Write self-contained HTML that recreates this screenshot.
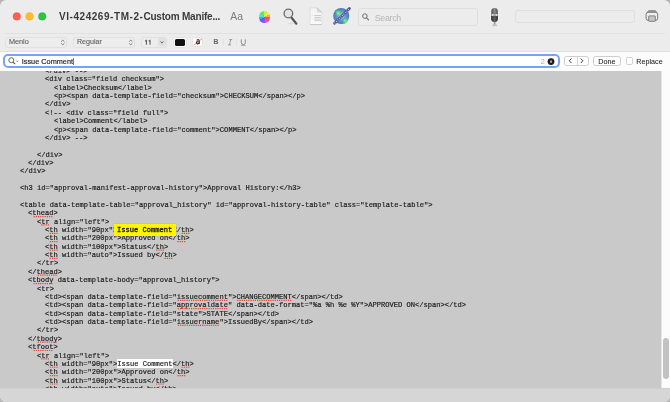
<!DOCTYPE html>
<html><head><meta charset="utf-8">
<style>
*{margin:0;padding:0;box-sizing:border-box}
html,body{width:670px;height:402px;overflow:hidden;background:#b4b4b4}
body{position:relative;font-family:"Liberation Sans",sans-serif}
.win{will-change:transform;position:absolute;left:0;top:0;width:670px;height:402px;border-radius:6px;overflow:hidden;background:#ececec}
.ab{position:absolute}
.t{position:absolute;white-space:nowrap;line-height:10px}
.ta{will-change:transform;position:absolute;left:0;top:70.6px;width:661px;height:317.6px;background:#c9c9c9;overflow:hidden}
.l{position:absolute;white-space:pre;font-family:"Liberation Mono",monospace;font-size:7.8px;line-height:8.37px;height:8.37px;color:#1c1c1c;-webkit-text-stroke:0.2px #1c1c1c;letter-spacing:0px;transform:scaleX(0.909);transform-origin:0 0}
.l u{text-decoration:none;position:relative;display:inline-block;height:8.37px;vertical-align:top}
.l u:after{content:"";position:absolute;left:0.3px;right:0.3px;top:6.75px;height:1.1px;background:repeating-linear-gradient(90deg,#e2483b 0 1.15px,transparent 1.15px 2.12px)}
.pop{position:absolute;border:0.6px solid #e0e0e0;border-radius:3px;background:#ededed}
.fbt{position:absolute;font-size:7.1px;color:#5e5e5e;-webkit-text-stroke:0.1px #5e5e5e;line-height:10px;white-space:nowrap}
</style></head><body>
<div class="win">
  <!-- title bar / toolbar -->
  <div class="ab" style="left:5px;top:32.8px;width:660px;height:0.8px;background:#e1e1e1"></div>
  <svg class="ab" style="left:0;top:0" width="56" height="30" viewBox="0 0 56 30">
    <circle cx="16.8" cy="16.4" r="3.85" fill="#fe5f57" stroke="#e2463f" stroke-width="0.3"/>
    <circle cx="29.5" cy="16.4" r="3.85" fill="#febc2e" stroke="#dea123" stroke-width="0.3"/>
    <circle cx="42.2" cy="16.4" r="3.85" fill="#28c840" stroke="#1dab2c" stroke-width="0.3"/>
  </svg>
  <div class="t" style="left:59px;top:12.2px;font-weight:bold;font-size:10px;color:#3b3b3b"><span style="letter-spacing:0.55px">VI-424269-TM-2-</span><span style="letter-spacing:-0.2px">Custom Manife...</span></div>
  <div class="t" style="left:230.3px;top:12.4px;font-size:10.4px;color:#7d7d7d">Aa</div>
  <!-- color wheel -->
  <div class="ab" style="left:258.5px;top:11.2px;width:11.5px;height:11.5px;border-radius:50%;filter:blur(0.25px);background:conic-gradient(#c8f048 0 30deg,#f8e848 30deg 60deg,#f8a848 60deg 90deg,#f85050 90deg 120deg,#f0489a 120deg 150deg,#e64ee6 150deg 180deg,#8c52ea 180deg 210deg,#4c62e8 210deg 240deg,#4aa8f2 240deg 270deg,#42e8d6 270deg 300deg,#4ae888 300deg 330deg,#62e852 330deg 360deg)"></div>
  <!-- magnifier -->
  <svg class="ab" style="left:280px;top:6px" width="22" height="22" viewBox="0 0 22 22">
    <ellipse cx="11" cy="17.6" rx="3.5" ry="0.8" fill="#000" opacity="0.06"/>
    <line x1="11.6" y1="11.8" x2="16.4" y2="17.7" stroke="#555" stroke-width="2.2" stroke-linecap="round"/>
    <circle cx="8.4" cy="7.5" r="4.3" fill="#e3e3e3" stroke="#6c6c6c" stroke-width="1.3"/>
  </svg>
  <!-- document -->
  <svg class="ab" style="left:306px;top:5px" width="22" height="22" viewBox="0 0 22 22">
    <defs><linearGradient id="dg" x1="0" y1="0" x2="0" y2="1"><stop offset="0" stop-color="#f2f2f2"/><stop offset="1" stop-color="#fbfbfb"/></linearGradient></defs>
    <path d="M4.1 2.8 H10.8 L15.9 7.5 V19.7 H4.1 Z" fill="url(#dg)" stroke="#d0d0d0" stroke-width="0.5"/>
    <path d="M10.8 2.8 L15.9 7.5 L12.2 7.6 Q10.9 7.4 10.8 6 Z" fill="#dadada"/>
    <path d="M10.8 2.8 L15.9 7.5" stroke="#a8a8a8" stroke-width="0.55"/>
    <rect x="4.1" y="19.0" width="11.8" height="0.8" fill="#c4c4c4"/>
    <g fill="#c4c4c4">
      <rect x="8.3" y="10.2" width="6.8" height="0.8"/>
      <rect x="8.3" y="11.9" width="6.8" height="0.8"/>
      <rect x="8.3" y="13.6" width="6.8" height="0.8"/>
      <rect x="8.3" y="15.3" width="6.8" height="0.8"/>
      <rect x="5.8" y="10.2" width="0.6" height="0.8"/>
      <rect x="5.8" y="13.6" width="0.6" height="0.8"/>
    </g>
  </svg>
  <!-- globe -->
  <svg class="ab" style="left:330px;top:5px" width="22" height="22" viewBox="0 0 22 22">
    <defs><radialGradient id="gg" cx="0.5" cy="0.5" r="0.55"><stop offset="0" stop-color="#b8d4f2"/><stop offset="0.55" stop-color="#6393d4"/><stop offset="1" stop-color="#3f6fba"/></radialGradient>
    <radialGradient id="gr" cx="0.5" cy="0.5" r="0.5"><stop offset="0" stop-color="#a0f4b4"/><stop offset="1" stop-color="#38c064"/></radialGradient></defs>
    <circle cx="11.2" cy="11" r="8" fill="url(#gg)"/>
    <path d="M5.2 6.2 Q8.2 4.4 11.4 5.6 Q11 9.6 8.4 11.4 Q5.6 10.2 5.2 6.2Z" fill="url(#gr)" opacity="0.85"/>
    <path d="M12.4 14 Q15.8 12 18.4 13.6 Q17.6 18 14.4 18.8 Q12 17.4 12.4 14Z" fill="url(#gr)" opacity="0.85"/>
    <line x1="4.6" y1="18.2" x2="19.4" y2="3.6" stroke="#4a5796" stroke-width="2.8" stroke-linecap="round"/>
    <line x1="4.6" y1="18.2" x2="19.4" y2="3.6" stroke="#d4dcf6" stroke-width="1.2" stroke-dasharray="0.8 1.3"/>
    <line x1="5.3" y1="18.6" x2="19.9" y2="4.2" stroke="#8b97cc" stroke-width="0.6" stroke-dasharray="1 1.1" opacity="0.8"/>
  </svg>
  <!-- search field -->
  <div class="ab" style="left:357.6px;top:8.2px;width:120.4px;height:17.4px;border:0.6px solid #dddddd;border-radius:3.5px;background:#ececec"></div>
  <svg class="ab" style="left:360px;top:11px" width="12" height="12" viewBox="0 0 12 12">
    <circle cx="4.9" cy="5.1" r="2.3" fill="none" stroke="#6f6f6f" stroke-width="1"/>
    <line x1="6.6" y1="6.8" x2="8.6" y2="8.8" stroke="#6f6f6f" stroke-width="1.1" stroke-linecap="round"/>
  </svg>
  <div class="t" style="left:374.7px;top:13px;font-size:8.8px;letter-spacing:-0.28px;color:#b5b5b5">Search</div>
  <!-- mic -->
  <svg class="ab" style="left:484px;top:5px;filter:blur(0.3px)" width="22" height="22" viewBox="0 0 22 22">
    <defs><linearGradient id="mg" x1="0" x2="1"><stop offset="0" stop-color="#4a4a4a"/><stop offset="0.5" stop-color="#8c8c8c"/><stop offset="1" stop-color="#4a4a4a"/></linearGradient>
    <linearGradient id="mg2" x1="0" x2="1"><stop offset="0" stop-color="#2e2e2e"/><stop offset="0.5" stop-color="#606060"/><stop offset="1" stop-color="#2e2e2e"/></linearGradient></defs>
    <rect x="6.6" y="2.6" width="7.9" height="15" rx="3.9" fill="#f4f4f4" opacity="0.7"/>
    <rect x="8.2" y="19.4" width="5" height="1.8" rx="0.5" fill="#c4c4c4"/>
    <rect x="9.8" y="16.6" width="1.7" height="3" fill="#9a9a9a"/>
    <rect x="7.3" y="3.0" width="6.5" height="14" rx="3.2" fill="url(#mg)"/>
    <path d="M7.3 10.9 H13.8 V13.8 Q13.8 16.9 10.5 16.9 Q7.3 16.9 7.3 13.8Z" fill="url(#mg2)"/>
    <rect x="7.3" y="9.2" width="6.5" height="1.6" fill="#a8a8a8"/>
    <circle cx="8.7" cy="10" r="0.8" fill="#fff"/><circle cx="12.4" cy="10" r="0.8" fill="#fff"/>
  </svg>
  <!-- right field -->
  <div class="ab" style="left:515.1px;top:10.1px;width:120.4px;height:12.5px;border:0.6px solid #dedede;border-radius:3px;background:#ececec"></div>
  <!-- printer -->
  <svg class="ab" style="left:640px;top:5px" width="22" height="22" viewBox="0 0 22 22">
    <path d="M8.6 5.6 H15.4 L16.6 7.2 H7.4 Z" fill="#ababab" stroke="#6e6e6e" stroke-width="0.6" stroke-linejoin="round"/>
    <rect x="6.1" y="7.3" width="11.6" height="8" rx="2" fill="#efefef" stroke="#6a6a6a" stroke-width="0.9"/>
    <rect x="8.7" y="10.9" width="6.6" height="5.4" rx="0.5" fill="#c6c6c6" stroke="#6a6a6a" stroke-width="0.8"/>
  </svg>
  <!-- format bar -->
  <div class="pop" style="left:5.4px;top:36.6px;width:62px;height:11.2px"></div>
  <div class="fbt" style="left:8.9px;top:37.3px;font-size:7.3px">Menlo</div>
  <svg class="ab" style="left:60px;top:39px" width="6" height="7" viewBox="0 0 6 7"><path d="M1.2 2.6 L2.8 1.1 L4.4 2.6 M1.2 4.3 L2.8 5.8 L4.4 4.3" fill="none" stroke="#5a5a5a" stroke-width="0.75"/></svg>
  <div class="pop" style="left:72.9px;top:36.6px;width:62px;height:11.2px"></div>
  <div class="fbt" style="left:77px;top:37.3px">Regular</div>
  <svg class="ab" style="left:127.5px;top:39px" width="6" height="7" viewBox="0 0 6 7"><path d="M1.2 2.6 L2.8 1.1 L4.4 2.6 M1.2 4.3 L2.8 5.8 L4.4 4.3" fill="none" stroke="#5a5a5a" stroke-width="0.75"/></svg>
  <div class="pop" style="left:140.6px;top:36.7px;width:26.6px;height:10.9px"></div>
  <svg class="ab" style="left:144px;top:39px" width="8" height="7" viewBox="0 0 8 7"><path d="M1 2.1 L2.4 1.4 V5.8 M4.6 2.1 L6 1.4 V5.8" fill="none" stroke="#5a5a5a" stroke-width="1.05"/></svg>
  <div class="ab" style="left:158.1px;top:38.1px;width:7.7px;height:8.3px;border-radius:2px;background:#e0e0e0"></div>
  <svg class="ab" style="left:158.1px;top:38.1px" width="8" height="9" viewBox="0 0 8 9"><path d="M2.4 3.6 L3.9 5 L5.4 3.6" fill="none" stroke="#555" stroke-width="0.95"/></svg>
  <div class="ab" style="left:174.4px;top:37.9px;width:11.2px;height:8.9px;border-radius:2px;background:#fff;box-shadow:0 0 0 0.4px #d6d6d6"></div>
  <div class="ab" style="left:175.2px;top:38.6px;width:9.6px;height:7.5px;border-radius:1.6px;background:#111"></div>
  <div class="ab" style="left:192.6px;top:38.4px;width:9.4px;height:7.6px;border-radius:1.5px;background:#fff;box-shadow:0 0 0 0.4px #d9d9d9"></div>
  <svg class="ab" style="left:192.6px;top:38.4px" width="10" height="8" viewBox="0 0 10 8">
    <path d="M3.6 2.2 Q4.6 1.5 5.6 1.8 Q6.3 2.1 6.2 3 V5.9 M6.2 3.6 Q3.4 3.5 3.4 4.8 Q3.5 6 4.8 5.9 Q5.9 5.8 6.2 4.8" fill="none" stroke="#1a1a1a" stroke-width="1.1"/>
    <line x1="0.8" y1="7.2" x2="9" y2="0.7" stroke="#e8553a" stroke-width="0.65"/>
  </svg>
  <div class="fbt" style="left:213.4px;top:36.9px;font-weight:bold;font-size:6.8px;color:#6e6e6e">B</div>
  <div class="ab" style="left:222.6px;top:38.8px;width:0.6px;height:7px;background:#e2e2e2"></div>
  <svg class="ab" style="left:226px;top:38px" width="8" height="9" viewBox="0 0 8 9">
    <path d="M3.2 1.6 H6.2 M2 6.9 H5 M4.7 1.6 L3.5 6.9" fill="none" stroke="#8a8a8a" stroke-width="0.8"/>
  </svg>
  <div class="ab" style="left:236.4px;top:38.8px;width:0.6px;height:7px;background:#e2e2e2"></div>
  <svg class="ab" style="left:239px;top:38px" width="9" height="9" viewBox="0 0 9 9">
    <path d="M2.3 1.4 V4.8 Q2.3 6.6 4.3 6.6 Q6.3 6.6 6.3 4.8 V1.4" fill="none" stroke="#858585" stroke-width="0.95"/>
    <line x1="2" y1="7.5" x2="6.6" y2="7.5" stroke="#8a8a8a" stroke-width="0.6"/>
  </svg>
  <!-- find bar -->
  <div class="ab" style="left:0;top:51.3px;width:670px;height:19.3px;background:#fcfcfc;border-top:0.5px solid #e0e0e0"></div>
  <div class="ab" style="left:3.2px;top:54.1px;width:556.8px;height:14.2px;border:2px solid #77a4f1;border-radius:5px;background:#fff"></div>
  <svg class="ab" style="left:7px;top:56px" width="14" height="10" viewBox="0 0 14 10">
    <circle cx="4.3" cy="4.2" r="2.5" fill="none" stroke="#555" stroke-width="0.9"/>
    <line x1="6.1" y1="6.1" x2="8.2" y2="8.2" stroke="#555" stroke-width="1.1"/>
    <path d="M9.3 4.6 L10.3 5.7 L11.3 4.6" fill="none" stroke="#555" stroke-width="0.75"/>
  </svg>
  <div class="t" style="left:21.7px;top:57.2px;font-size:7.3px;letter-spacing:0.02px;color:#1e1e1e;-webkit-text-stroke:0.15px #1e1e1e">Issue Comment</div>
  <div class="ab" style="left:73.3px;top:57.6px;width:1.2px;height:7.1px;background:#3a7ff0"></div>
  <div class="t" style="left:540.8px;top:57.2px;font-size:7.2px;color:#a9a9a9">2</div>
  <svg class="ab" style="left:546.7px;top:57.8px" width="8" height="8" viewBox="0 0 8 8"><circle cx="4" cy="3.6" r="3.4" fill="#1a1a1a"/><path d="M2.9 2.5 L5.1 4.7 M5.1 2.5 L2.9 4.7" stroke="#fff" stroke-width="0.75"/></svg>
  <div class="ab" style="left:564.4px;top:56.2px;width:24.3px;height:9.4px;border:0.6px solid #cfcfcf;border-radius:2.5px;background:#fff"></div>
  <div class="ab" style="left:576.5px;top:56.6px;width:0.6px;height:8.8px;background:#d4d4d4"></div>
  <svg class="ab" style="left:564.4px;top:56.2px" width="25" height="10" viewBox="0 0 25 10">
    <path d="M7.5 2.5 L5.3 4.8 L7.5 7.1" fill="none" stroke="#333" stroke-width="0.95"/>
    <path d="M16.7 2.5 L18.9 4.8 L16.7 7.1" fill="none" stroke="#333" stroke-width="0.95"/>
  </svg>
  <div class="ab" style="left:593.2px;top:56px;width:27.6px;height:10px;border:0.7px solid #cdcdcd;border-radius:2.5px;background:#fff"></div>
  <div class="t" style="left:598.3px;top:56.9px;font-size:7.2px;color:#222;-webkit-text-stroke:0.05px #222">Done</div>
  <div class="ab" style="left:625.6px;top:57.4px;width:7.6px;height:7.2px;border:0.6px solid #d2d2d2;border-radius:1.8px;background:#fff"></div>
  <div class="t" style="left:636.3px;top:56.8px;font-size:7.2px;color:#222;-webkit-text-stroke:0.05px #222">Replace</div>
  <!-- text area -->
  <div class="ta">
  <div class="ab" style="left:117.1px;top:288.30px;width:56px;height:8.9px;background:#ffffff"></div>
  <div class="l" style="top:-4.05px;left:45.13px">&lt;/div&gt; --&gt;</div><div class="l" style="top:4.32px;left:45.13px">&lt;div class="field checksum"&gt;</div><div class="l" style="top:12.69px;left:53.64px">&lt;label&gt;Checksum&lt;/label&gt;</div><div class="l" style="top:21.06px;left:53.64px">&lt;p&gt;&lt;span data-template-field="checksum"&gt;CHECKSUM&lt;/span&gt;&lt;/p&gt;</div><div class="l" style="top:29.43px;left:45.13px">&lt;/div&gt;</div><div class="l" style="top:37.80px;left:45.13px">&lt;!-- &lt;div class="field full"&gt;</div><div class="l" style="top:46.17px;left:53.64px">&lt;label&gt;Comment&lt;/label&gt;</div><div class="l" style="top:54.54px;left:53.64px">&lt;p&gt;&lt;span data-template-field="comment"&gt;COMMENT&lt;/span&gt;&lt;/p&gt;</div><div class="l" style="top:62.91px;left:45.13px">&lt;/div&gt; --&gt;</div><div class="l" style="top:79.65px;left:36.62px">&lt;/div&gt;</div><div class="l" style="top:88.02px;left:28.11px">&lt;/div&gt;</div><div class="l" style="top:96.39px;left:19.60px">&lt;/div&gt;</div><div class="l" style="top:113.13px;left:19.60px">&lt;h3 id="approval-manifest-approval-history"&gt;Approval History:&lt;/h3&gt;</div><div class="l" style="top:129.87px;left:19.60px">&lt;table data-template-table="approval_history" id="approval-history-table" class="template-table"&gt;</div><div class="l" style="top:138.24px;left:28.11px">&lt;thead&gt;</div><div class="l" style="top:146.61px;left:36.62px">&lt;tr align="left"&gt;</div><div class="l" style="top:154.98px;left:45.13px">&lt;th width="90px"&gt;Issue Comment&lt;/th&gt;</div><div class="l" style="top:163.35px;left:45.13px">&lt;th width="200px"&gt;Approved on&lt;/th&gt;</div><div class="l" style="top:171.72px;left:45.13px">&lt;th width="100px"&gt;Status&lt;/th&gt;</div><div class="l" style="top:180.09px;left:45.13px">&lt;th width="auto"&gt;Issued by&lt;/th&gt;</div><div class="l" style="top:188.46px;left:36.62px">&lt;/tr&gt;</div><div class="l" style="top:196.83px;left:28.11px">&lt;/thead&gt;</div><div class="l" style="top:205.20px;left:28.11px">&lt;tbody data-template-body="approval_history"&gt;</div><div class="l" style="top:213.57px;left:36.62px">&lt;tr&gt;</div><div class="l" style="top:221.94px;left:45.13px">&lt;td&gt;&lt;span data-template-field="issuecomment"&gt;CHANGECOMMENT&lt;/span&gt;&lt;/td&gt;</div><div class="l" style="top:230.31px;left:45.13px">&lt;td&gt;&lt;span data-template-field="approvaldate" data-date-format="%a %h %e %Y"&gt;APPROVED ON&lt;/span&gt;&lt;/td&gt;</div><div class="l" style="top:238.68px;left:45.13px">&lt;td&gt;&lt;span data-template-field="state"&gt;STATE&lt;/span&gt;&lt;/td&gt;</div><div class="l" style="top:247.05px;left:45.13px">&lt;td&gt;&lt;span data-template-field="issuername"&gt;IssuedBy&lt;/span&gt;&lt;/td&gt;</div><div class="l" style="top:255.42px;left:36.62px">&lt;/tr&gt;</div><div class="l" style="top:263.79px;left:28.11px">&lt;/tbody&gt;</div><div class="l" style="top:272.16px;left:28.11px">&lt;tfoot&gt;</div><div class="l" style="top:280.53px;left:36.62px">&lt;tr align="left"&gt;</div><div class="l" style="top:288.90px;left:45.13px">&lt;th width="90px"&gt;Issue Comment&lt;/th&gt;</div><div class="l" style="top:297.27px;left:45.13px">&lt;th width="200px"&gt;Approved on&lt;/th&gt;</div><div class="l" style="top:305.64px;left:45.13px">&lt;th width="100px"&gt;Status&lt;/th&gt;</div><div class="l" style="top:314.01px;left:45.13px">&lt;th width="auto"&gt;Issued by&lt;/th&gt;</div>
  <svg class="ab" style="left:0;top:0" width="661" height="318" viewBox="0 0 661 318"><path fill="#e2483b" d="M33.60 144.99h1.2v1.2h-1.2zM35.80 144.99h1.2v1.2h-1.2zM38.00 144.99h1.2v1.2h-1.2zM40.20 144.99h1.2v1.2h-1.2zM42.40 144.99h1.2v1.2h-1.2zM44.60 144.99h1.2v1.2h-1.2zM46.80 144.99h1.2v1.2h-1.2zM49.00 144.99h1.2v1.2h-1.2zM51.20 144.99h1.2v1.2h-1.2zM41.23 153.36h1.2v1.2h-1.2zM43.43 153.36h1.2v1.2h-1.2zM45.63 153.36h1.2v1.2h-1.2zM47.83 153.36h1.2v1.2h-1.2zM49.74 161.73h1.2v1.2h-1.2zM51.94 161.73h1.2v1.2h-1.2zM54.14 161.73h1.2v1.2h-1.2zM56.34 161.73h1.2v1.2h-1.2zM181.64 161.73h1.2v1.2h-1.2zM183.84 161.73h1.2v1.2h-1.2zM186.04 161.73h1.2v1.2h-1.2zM188.24 161.73h1.2v1.2h-1.2zM49.74 170.10h1.2v1.2h-1.2zM51.94 170.10h1.2v1.2h-1.2zM54.14 170.10h1.2v1.2h-1.2zM56.34 170.10h1.2v1.2h-1.2zM177.39 170.10h1.2v1.2h-1.2zM179.59 170.10h1.2v1.2h-1.2zM181.79 170.10h1.2v1.2h-1.2zM183.99 170.10h1.2v1.2h-1.2zM49.74 178.47h1.2v1.2h-1.2zM51.94 178.47h1.2v1.2h-1.2zM54.14 178.47h1.2v1.2h-1.2zM56.34 178.47h1.2v1.2h-1.2zM156.11 178.47h1.2v1.2h-1.2zM158.31 178.47h1.2v1.2h-1.2zM160.51 178.47h1.2v1.2h-1.2zM162.71 178.47h1.2v1.2h-1.2zM49.74 186.84h1.2v1.2h-1.2zM51.94 186.84h1.2v1.2h-1.2zM54.14 186.84h1.2v1.2h-1.2zM56.34 186.84h1.2v1.2h-1.2zM164.62 186.84h1.2v1.2h-1.2zM166.82 186.84h1.2v1.2h-1.2zM169.03 186.84h1.2v1.2h-1.2zM171.22 186.84h1.2v1.2h-1.2zM37.86 203.58h1.2v1.2h-1.2zM40.06 203.58h1.2v1.2h-1.2zM42.26 203.58h1.2v1.2h-1.2zM44.46 203.58h1.2v1.2h-1.2zM46.66 203.58h1.2v1.2h-1.2zM48.86 203.58h1.2v1.2h-1.2zM51.06 203.58h1.2v1.2h-1.2zM53.26 203.58h1.2v1.2h-1.2zM55.46 203.58h1.2v1.2h-1.2zM33.60 211.95h1.2v1.2h-1.2zM35.80 211.95h1.2v1.2h-1.2zM38.00 211.95h1.2v1.2h-1.2zM40.20 211.95h1.2v1.2h-1.2zM42.40 211.95h1.2v1.2h-1.2zM44.60 211.95h1.2v1.2h-1.2zM46.80 211.95h1.2v1.2h-1.2zM49.00 211.95h1.2v1.2h-1.2zM51.20 211.95h1.2v1.2h-1.2zM177.76 228.69h1.2v1.2h-1.2zM179.96 228.69h1.2v1.2h-1.2zM182.16 228.69h1.2v1.2h-1.2zM184.36 228.69h1.2v1.2h-1.2zM186.56 228.69h1.2v1.2h-1.2zM188.76 228.69h1.2v1.2h-1.2zM190.96 228.69h1.2v1.2h-1.2zM193.16 228.69h1.2v1.2h-1.2zM195.36 228.69h1.2v1.2h-1.2zM197.56 228.69h1.2v1.2h-1.2zM199.76 228.69h1.2v1.2h-1.2zM201.96 228.69h1.2v1.2h-1.2zM204.16 228.69h1.2v1.2h-1.2zM206.36 228.69h1.2v1.2h-1.2zM208.56 228.69h1.2v1.2h-1.2zM210.76 228.69h1.2v1.2h-1.2zM212.96 228.69h1.2v1.2h-1.2zM215.16 228.69h1.2v1.2h-1.2zM217.36 228.69h1.2v1.2h-1.2zM219.56 228.69h1.2v1.2h-1.2zM221.76 228.69h1.2v1.2h-1.2zM223.96 228.69h1.2v1.2h-1.2zM226.16 228.69h1.2v1.2h-1.2zM237.26 228.69h1.2v1.2h-1.2zM239.46 228.69h1.2v1.2h-1.2zM241.66 228.69h1.2v1.2h-1.2zM243.86 228.69h1.2v1.2h-1.2zM246.06 228.69h1.2v1.2h-1.2zM248.26 228.69h1.2v1.2h-1.2zM250.46 228.69h1.2v1.2h-1.2zM252.66 228.69h1.2v1.2h-1.2zM254.86 228.69h1.2v1.2h-1.2zM257.06 228.69h1.2v1.2h-1.2zM259.26 228.69h1.2v1.2h-1.2zM261.46 228.69h1.2v1.2h-1.2zM263.66 228.69h1.2v1.2h-1.2zM265.86 228.69h1.2v1.2h-1.2zM268.06 228.69h1.2v1.2h-1.2zM270.26 228.69h1.2v1.2h-1.2zM272.46 228.69h1.2v1.2h-1.2zM274.66 228.69h1.2v1.2h-1.2zM276.86 228.69h1.2v1.2h-1.2zM279.06 228.69h1.2v1.2h-1.2zM281.26 228.69h1.2v1.2h-1.2zM283.46 228.69h1.2v1.2h-1.2zM285.66 228.69h1.2v1.2h-1.2zM287.86 228.69h1.2v1.2h-1.2zM290.06 228.69h1.2v1.2h-1.2zM177.76 237.06h1.2v1.2h-1.2zM179.96 237.06h1.2v1.2h-1.2zM182.16 237.06h1.2v1.2h-1.2zM184.36 237.06h1.2v1.2h-1.2zM186.56 237.06h1.2v1.2h-1.2zM188.76 237.06h1.2v1.2h-1.2zM190.96 237.06h1.2v1.2h-1.2zM193.16 237.06h1.2v1.2h-1.2zM195.36 237.06h1.2v1.2h-1.2zM197.56 237.06h1.2v1.2h-1.2zM199.76 237.06h1.2v1.2h-1.2zM201.96 237.06h1.2v1.2h-1.2zM204.16 237.06h1.2v1.2h-1.2zM206.36 237.06h1.2v1.2h-1.2zM208.56 237.06h1.2v1.2h-1.2zM210.76 237.06h1.2v1.2h-1.2zM212.96 237.06h1.2v1.2h-1.2zM215.16 237.06h1.2v1.2h-1.2zM217.36 237.06h1.2v1.2h-1.2zM219.56 237.06h1.2v1.2h-1.2zM221.76 237.06h1.2v1.2h-1.2zM223.96 237.06h1.2v1.2h-1.2zM226.16 237.06h1.2v1.2h-1.2zM177.91 253.80h1.2v1.2h-1.2zM180.11 253.80h1.2v1.2h-1.2zM182.31 253.80h1.2v1.2h-1.2zM184.51 253.80h1.2v1.2h-1.2zM186.71 253.80h1.2v1.2h-1.2zM188.91 253.80h1.2v1.2h-1.2zM191.11 253.80h1.2v1.2h-1.2zM193.31 253.80h1.2v1.2h-1.2zM195.51 253.80h1.2v1.2h-1.2zM197.71 253.80h1.2v1.2h-1.2zM199.91 253.80h1.2v1.2h-1.2zM202.11 253.80h1.2v1.2h-1.2zM204.31 253.80h1.2v1.2h-1.2zM206.51 253.80h1.2v1.2h-1.2zM208.71 253.80h1.2v1.2h-1.2zM210.91 253.80h1.2v1.2h-1.2zM213.11 253.80h1.2v1.2h-1.2zM215.31 253.80h1.2v1.2h-1.2zM217.51 253.80h1.2v1.2h-1.2zM37.86 270.54h1.2v1.2h-1.2zM40.06 270.54h1.2v1.2h-1.2zM42.26 270.54h1.2v1.2h-1.2zM44.46 270.54h1.2v1.2h-1.2zM46.66 270.54h1.2v1.2h-1.2zM48.86 270.54h1.2v1.2h-1.2zM51.06 270.54h1.2v1.2h-1.2zM53.26 270.54h1.2v1.2h-1.2zM55.46 270.54h1.2v1.2h-1.2zM33.60 278.91h1.2v1.2h-1.2zM35.80 278.91h1.2v1.2h-1.2zM38.00 278.91h1.2v1.2h-1.2zM40.20 278.91h1.2v1.2h-1.2zM42.40 278.91h1.2v1.2h-1.2zM44.60 278.91h1.2v1.2h-1.2zM46.80 278.91h1.2v1.2h-1.2zM49.00 278.91h1.2v1.2h-1.2zM51.20 278.91h1.2v1.2h-1.2zM41.23 287.28h1.2v1.2h-1.2zM43.43 287.28h1.2v1.2h-1.2zM45.63 287.28h1.2v1.2h-1.2zM47.83 287.28h1.2v1.2h-1.2zM49.74 295.65h1.2v1.2h-1.2zM51.94 295.65h1.2v1.2h-1.2zM54.14 295.65h1.2v1.2h-1.2zM56.34 295.65h1.2v1.2h-1.2zM181.64 295.65h1.2v1.2h-1.2zM183.84 295.65h1.2v1.2h-1.2zM186.04 295.65h1.2v1.2h-1.2zM188.24 295.65h1.2v1.2h-1.2zM49.74 304.02h1.2v1.2h-1.2zM51.94 304.02h1.2v1.2h-1.2zM54.14 304.02h1.2v1.2h-1.2zM56.34 304.02h1.2v1.2h-1.2zM177.39 304.02h1.2v1.2h-1.2zM179.59 304.02h1.2v1.2h-1.2zM181.79 304.02h1.2v1.2h-1.2zM183.99 304.02h1.2v1.2h-1.2zM49.74 312.39h1.2v1.2h-1.2zM51.94 312.39h1.2v1.2h-1.2zM54.14 312.39h1.2v1.2h-1.2zM56.34 312.39h1.2v1.2h-1.2zM156.11 312.39h1.2v1.2h-1.2zM158.31 312.39h1.2v1.2h-1.2zM160.51 312.39h1.2v1.2h-1.2zM162.71 312.39h1.2v1.2h-1.2zM49.74 320.76h1.2v1.2h-1.2zM51.94 320.76h1.2v1.2h-1.2zM54.14 320.76h1.2v1.2h-1.2zM56.34 320.76h1.2v1.2h-1.2zM164.62 320.76h1.2v1.2h-1.2zM166.82 320.76h1.2v1.2h-1.2zM169.03 320.76h1.2v1.2h-1.2zM171.22 320.76h1.2v1.2h-1.2z"/></svg>
  <div class="ab" style="left:114px;top:153.30px;width:61.7px;height:11.3px;background:#fff700;box-shadow:0 0 0.8px rgba(60,60,120,0.45)"></div>
  <div class="l" style="left:117.47px;top:154.98px;-webkit-text-stroke:0.35px #1a1a1a">Issue Comment</div>
  </div>
  <div class="ab" style="left:661px;top:70.6px;width:9px;height:317.4px;background:#fcfcfc;border-left:0.5px solid #e6e6e6"></div>
  <div class="ab" style="left:663.4px;top:338px;width:5.2px;height:40.7px;border-radius:3px;background:#c2c2c2"></div>
  <div class="ab" style="left:0;top:388px;width:670px;height:14px;background:#d6d6d6;border-top:0.5px solid #cfcfcf"></div>
</div>
</body></html>
